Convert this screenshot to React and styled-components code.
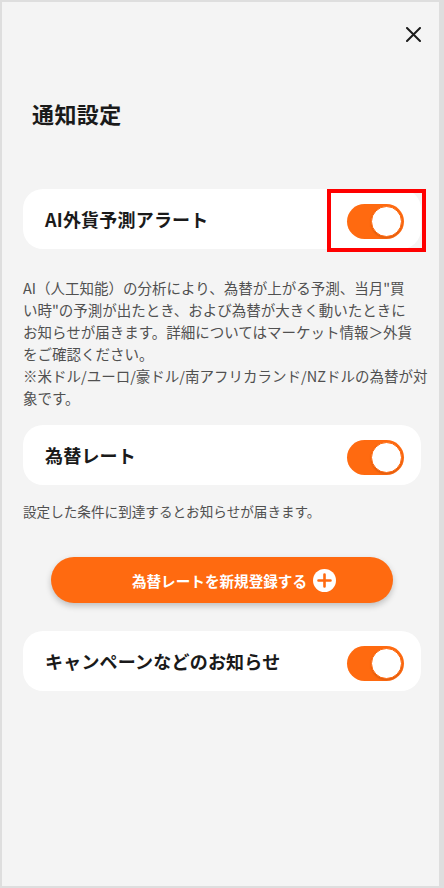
import React, { useState } from "react";
import styled, { createGlobalStyle } from "styled-components";

const GlobalStyle = createGlobalStyle`
  html, body {
    margin: 0;
    padding: 0;
    background: #ffffff;
  }
  * {
    box-sizing: border-box;
  }
`;

const ORANGE = "#ff6a10";

const items = [
  {
    id: "ai",
    label: "AI外貨予測アラート",
    note:
      'AI（人工知能）の分析により、為替が上がる予測、当月"買い時"の予測が出たとき、および為替が大きく動いたときにお知らせが届きます。詳細についてはマーケット情報＞外貨をご確認ください。',
    sub: "※米ドル/ユーロ/豪ドル/南アフリカランド/NZドルの為替が対象です。",
  },
  {
    id: "rate",
    label: "為替レート",
    note: "設定した条件に到達するとお知らせが届きます。",
    action: "為替レートを新規登録する",
  },
  {
    id: "campaign",
    label: "キャンペーンなどのお知らせ",
  },
];

export default function App() {
  const [enabled, setEnabled] = useState({ ai: true, rate: true, campaign: true });

  const toggle = (id) => setEnabled((prev) => ({ ...prev, [id]: !prev[id] }));

  return (
    <>
      <GlobalStyle />
      <Screen>
        <Header>
          <CloseButton aria-label="閉じる">
            <svg width="15" height="15" viewBox="0 0 15 15">
              <path d="M1 1 14 14M14 1 1 14" stroke="#1c1c1c" strokeWidth="2" strokeLinecap="round" fill="none" />
            </svg>
          </CloseButton>
        </Header>
        <Title>通知設定</Title>

        {/* AI alert */}
        <Card $top={60}>
          <Label>{items[0].label}</Label>
          <Switch on={enabled.ai} onClick={() => toggle("ai")} />
          <Highlight />
        </Card>
        <Note $top={28}>
          {items[0].note}
          <SubNote>{items[0].sub}</SubNote>
        </Note>

        {/* rate */}
        <Card $top={16}>
          <Label>{items[1].label}</Label>
          <Switch on={enabled.rate} onClick={() => toggle("rate")} />
        </Card>
        <Note $top={16} $small>
          {items[1].note}
        </Note>
        <AddButton>
          <span>{items[1].action}</span>
          <PlusIcon>
            <svg width="23" height="23" viewBox="0 0 23 23">
              <circle cx="11.5" cy="11.5" r="11.5" fill="#ffffff" />
              <path d="M11.5 5.5v12M5.5 11.5h12" stroke={ORANGE} strokeWidth="2.6" strokeLinecap="round" />
            </svg>
          </PlusIcon>
        </AddButton>

        {/* campaign */}
        <Card $top={28}>
          <Label>{items[2].label}</Label>
          <Switch on={enabled.campaign} onClick={() => toggle("campaign")} />
        </Card>
      </Screen>
    </>
  );
}

function Switch({ on, onClick }) {
  return (
    <Track role="switch" aria-checked={on} $on={on} onClick={onClick}>
      <Knob $on={on} />
    </Track>
  );
}

const Screen = styled.div`
  width: 444px;
  height: 888px;
  overflow: hidden;
  background: #f4f4f4;
  border-style: solid;
  border-color: #dedede;
  border-width: 2px 5px 2px 2px;
  padding: 0 18px 0 21px;
  display: flex;
  flex-direction: column;
  font-family: "Noto Sans CJK JP", "Noto Sans", sans-serif;
  color: #1a1a1a;
`;

const Header = styled.div`
  display: flex;
  justify-content: flex-end;
  padding-top: 25px;
`;

const CloseButton = styled.button`
  width: 15px;
  height: 15px;
  padding: 0;
  border: none;
  background: none;
  display: flex;
  cursor: pointer;
`;

const Title = styled.h1`
  margin: 56px 0 0 9px;
  font-size: 22px;
  line-height: 31px;
  font-weight: 700;
  letter-spacing: 0.4px;
`;

const Card = styled.div`
  position: relative;
  margin-top: ${(p) => p.$top}px;
  height: 60px;
  border-radius: 20px;
  background: #ffffff;
  display: flex;
  align-items: center;
  justify-content: space-between;
  padding: 0 17px 0 22px;
`;

const Label = styled.span`
  font-size: 18px;
  font-weight: 700;
  line-height: 1;
  letter-spacing: 0.2px;
  color: #1a1a1a;
`;

const Track = styled.span`
  position: relative;
  width: 57px;
  height: 35px;
  margin-top: 4px;
  border-radius: 18px;
  background: ${(p) => (p.$on ? ORANGE : "#d0d0d0")};
  cursor: pointer;
  flex-shrink: 0;
`;

const Knob = styled.span`
  position: absolute;
  top: 2px;
  left: ${(p) => (p.$on ? "24px" : "2px")};
  width: 31px;
  height: 31px;
  border-radius: 50%;
  background: #ffffff;
  border: 1.5px solid ${ORANGE};
  box-shadow: 0 1px 2px rgba(0, 0, 0, 0.15);
`;

const Highlight = styled.span`
  position: absolute;
  left: 304px;
  top: 0;
  width: 99px;
  height: 63px;
  border: 4px solid #ff0000;
  pointer-events: none;
`;

const Note = styled.p`
  margin: ${(p) => p.$top}px 3px 0 0;
  font-size: ${(p) => (p.$small ? "13.6px" : "14.5px")};
  line-height: ${(p) => (p.$small ? "20px" : "22px")};
  color: #505050;
`;

const SubNote = styled.span`
  display: block;
  margin-right: -12px;
`;

const AddButton = styled.button`
  margin: 36px 28px 0;
  height: 46px;
  border: none;
  border-radius: 23px;
  background: ${ORANGE};
  box-shadow: 0 3px 6px rgba(0, 0, 0, 0.22);
  color: #ffffff;
  font-family: inherit;
  font-size: 14.6px;
  font-weight: 700;
  display: flex;
  align-items: center;
  justify-content: center;
  gap: 6px;
  padding: 0 0 0 24px;
  cursor: pointer;
`;

const PlusIcon = styled.span`
  display: flex;
  width: 23px;
  height: 23px;
`;
